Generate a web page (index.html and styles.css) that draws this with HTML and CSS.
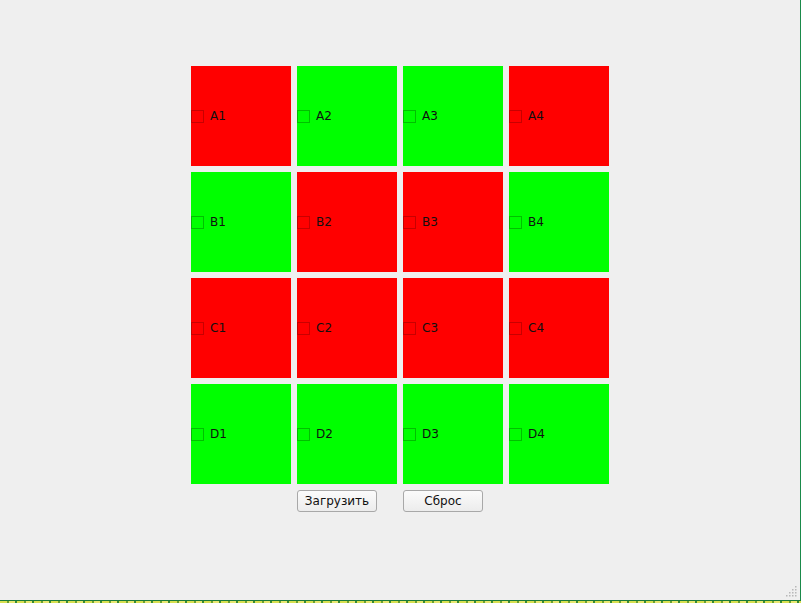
FILE: index.html
```html
<!DOCTYPE html>
<html>
<head>
<meta charset="utf-8">
<link rel="stylesheet" href="styles.css">
</head>
<body>
<div class="window">
  <div class="content">
    <div class="grid">
      <div class="cell red"><span class="box"></span><span class="lbl">A1</span></div>
      <div class="cell green"><span class="box"></span><span class="lbl">A2</span></div>
      <div class="cell green"><span class="box"></span><span class="lbl">A3</span></div>
      <div class="cell red"><span class="box"></span><span class="lbl">A4</span></div>
      <div class="cell green"><span class="box"></span><span class="lbl">B1</span></div>
      <div class="cell red"><span class="box"></span><span class="lbl">B2</span></div>
      <div class="cell red"><span class="box"></span><span class="lbl">B3</span></div>
      <div class="cell green"><span class="box"></span><span class="lbl">B4</span></div>
      <div class="cell red"><span class="box"></span><span class="lbl">C1</span></div>
      <div class="cell red"><span class="box"></span><span class="lbl">C2</span></div>
      <div class="cell red"><span class="box"></span><span class="lbl">C3</span></div>
      <div class="cell red"><span class="box"></span><span class="lbl">C4</span></div>
      <div class="cell green"><span class="box"></span><span class="lbl">D1</span></div>
      <div class="cell green"><span class="box"></span><span class="lbl">D2</span></div>
      <div class="cell green"><span class="box"></span><span class="lbl">D3</span></div>
      <div class="cell green"><span class="box"></span><span class="lbl">D4</span></div>
    </div>
    <div class="buttons">
      <button class="btn">Загрузить</button>
      <button class="btn">Сброс</button>
    </div>
  </div>
  <svg class="grip" width="12" height="12" viewBox="0 0 12 12">
    <g fill="#b8b8b8">
      <rect x="9" y="0" width="1.5" height="1.5"/>
      <rect x="6" y="3" width="1.5" height="1.5"/>
      <rect x="9" y="3" width="1.5" height="1.5"/>
      <rect x="3" y="6" width="1.5" height="1.5"/>
      <rect x="6" y="6" width="1.5" height="1.5"/>
      <rect x="9" y="6" width="1.5" height="1.5"/>
      <rect x="0" y="9" width="1.5" height="1.5"/>
      <rect x="3" y="9" width="1.5" height="1.5"/>
      <rect x="6" y="9" width="1.5" height="1.5"/>
      <rect x="9" y="9" width="1.5" height="1.5"/>
    </g>
  </svg>
</div>
<div class="desktop"></div>
</body>
</html>
```
FILE: styles.css
```css
html, body {
  margin: 0;
  padding: 0;
  width: 801px;
  height: 603px;
  overflow: hidden;
  background: #d4d84a;
  font-family: "DejaVu Sans", sans-serif;
  font-size: 12px;
  color: #101010;
}
.window {
  position: relative;
  width: 800px;
  height: 600px;
  background: #efefef;
  border-right: 1px solid #1a8a4a;
  box-sizing: content-box;
}
.content {
  padding: 66px 0 0 191px;
  display: flex;
  flex-direction: column;
  gap: 6px;
}
.grid {
  display: grid;
  grid-template-columns: repeat(4, 100px);
  grid-auto-rows: 100px;
  gap: 6px;
}
.cell {
  display: flex;
  align-items: center;
}
.red { background: #ff0000; }
.green { background: #00ff00; }
.box {
  width: 12px;
  height: 12px;
  margin-right: 6px;
  box-sizing: content-box;
}
.red .box { border: 1px solid #c80000; width: 11px; height: 11px; }
.green .box { border: 1px solid #00c000; width: 11px; height: 11px; }
.lbl {
  line-height: 14px;
}
.buttons {
  display: flex;
  gap: 26px;
  padding-left: 106px;
}
.btn {
  width: 80px;
  height: 22px;
  margin: 0;
  padding: 0;
  font-family: "DejaVu Sans", sans-serif;
  font-size: 12px;
  color: #101010;
  background: linear-gradient(#fbfbfb, #ececec);
  border: 1px solid #a8a8a8;
  border-radius: 3px;
}
.grip {
  position: absolute;
  right: 2px;
  bottom: 2px;
}
.desktop {
  height: 3px;
  border-top: 1px solid #1a7a3a;
  background: repeating-linear-gradient(90deg, #d8e050 0 7px, #6aa030 7px 9px, #e8e870 9px 15px, #3a8a30 15px 17px);
}
```
